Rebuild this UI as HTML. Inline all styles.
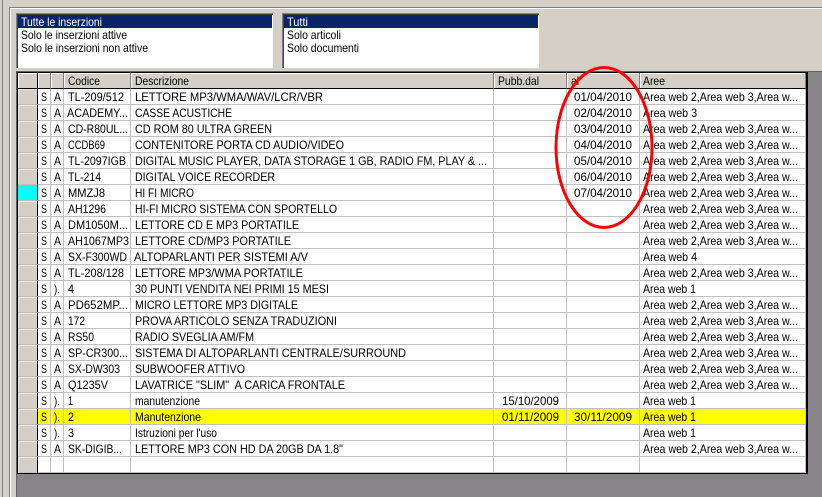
<!DOCTYPE html>
<html><head><meta charset="utf-8"><style>
html,body{margin:0;padding:0}
body{width:822px;height:497px;overflow:hidden;position:relative;background:#d4d0c8;color:#000}
.a{position:absolute}
table{position:absolute;left:18px;top:73px;border-collapse:separate;border-spacing:0;table-layout:fixed;width:788px;background:#fff}
td,th{height:15px;padding:0;border-right:1px solid #c0c0c0;border-bottom:1px solid #c0c0c0;font-size:0;line-height:0;box-sizing:content-box}
th{background:#d4d0c8;border-right-color:#808080;border-bottom-color:#000;box-shadow:inset 1px 1px 0 #fff}
td.i{background:#d4d0c8;border-right:1px solid #000;border-bottom:1px solid #c0c0c0;box-shadow:inset 1px 1px 0 #e8e6e0}
th.i{border-right:1px solid #000}
.y td:not(.i){background:#ff0}
svg text{font-family:"Liberation Sans",sans-serif;font-size:12px;white-space:pre;fill:#000}
</style></head><body>
<div class="a" style="left:2px;top:0;width:1px;height:497px;background:#808080"></div>
<div class="a" style="left:9px;top:7px;width:813px;height:1px;background:#808080"></div>
<div class="a" style="left:10px;top:8px;width:812px;height:1px;background:#fff"></div>
<div class="a" style="left:9px;top:7px;width:1px;height:490px;background:#808080"></div>
<div class="a" style="left:10px;top:8px;width:1px;height:489px;background:#fff"></div>

<div class="a" style="left:16px;top:13px;width:257px;height:55px;background:#808080"></div>
<div class="a" style="left:17px;top:14px;width:256px;height:54px;background:#404040"></div>
<div class="a" style="left:18px;top:15px;width:255px;height:53px;background:#fff"></div>
<div class="a" style="left:18px;top:15px;width:254px;height:13px;background:#0a246a"></div>
<div class="a" style="left:282px;top:13px;width:257px;height:55px;background:#808080"></div>
<div class="a" style="left:283px;top:14px;width:256px;height:54px;background:#404040"></div>
<div class="a" style="left:284px;top:15px;width:255px;height:53px;background:#fff"></div>
<div class="a" style="left:284px;top:15px;width:254px;height:13px;background:#0a246a"></div>

<div class="a" style="left:17px;top:72px;width:805px;height:425px;background:#868486"></div>
<div class="a" style="left:16px;top:71px;width:806px;height:1px;background:#606060"></div>
<div class="a" style="left:16px;top:71px;width:1px;height:426px;background:#606060"></div>
<div class="a" style="left:17px;top:72px;width:791px;height:402px;background:#000"></div>
<table><colgroup><col style="width:20px"><col style="width:13px"><col style="width:13px"><col style="width:67px"><col style="width:363px"><col style="width:73px"><col style="width:73px"><col style="width:166px"></colgroup>
<tr><th class="i"></th><th></th><th></th><th></th><th></th><th></th><th></th><th></th></tr>
<tr><td class="i"></td><td></td><td></td><td></td><td></td><td></td><td></td><td></td></tr>
<tr><td class="i"></td><td></td><td></td><td></td><td></td><td></td><td></td><td></td></tr>
<tr><td class="i"></td><td></td><td></td><td></td><td></td><td></td><td></td><td></td></tr>
<tr><td class="i"></td><td></td><td></td><td></td><td></td><td></td><td></td><td></td></tr>
<tr><td class="i"></td><td></td><td></td><td></td><td></td><td></td><td></td><td></td></tr>
<tr><td class="i"></td><td></td><td></td><td></td><td></td><td></td><td></td><td></td></tr>
<tr><td class="i" style="background:#00ffff;box-shadow:none"></td><td></td><td></td><td></td><td></td><td></td><td></td><td></td></tr>
<tr><td class="i"></td><td></td><td></td><td></td><td></td><td></td><td></td><td></td></tr>
<tr><td class="i"></td><td></td><td></td><td></td><td></td><td></td><td></td><td></td></tr>
<tr><td class="i"></td><td></td><td></td><td></td><td></td><td></td><td></td><td></td></tr>
<tr><td class="i"></td><td></td><td></td><td></td><td></td><td></td><td></td><td></td></tr>
<tr><td class="i"></td><td></td><td></td><td></td><td></td><td></td><td></td><td></td></tr>
<tr><td class="i"></td><td></td><td></td><td></td><td></td><td></td><td></td><td></td></tr>
<tr><td class="i"></td><td></td><td></td><td></td><td></td><td></td><td></td><td></td></tr>
<tr><td class="i"></td><td></td><td></td><td></td><td></td><td></td><td></td><td></td></tr>
<tr><td class="i"></td><td></td><td></td><td></td><td></td><td></td><td></td><td></td></tr>
<tr><td class="i"></td><td></td><td></td><td></td><td></td><td></td><td></td><td></td></tr>
<tr><td class="i"></td><td></td><td></td><td></td><td></td><td></td><td></td><td></td></tr>
<tr><td class="i"></td><td></td><td></td><td></td><td></td><td></td><td></td><td></td></tr>
<tr><td class="i"></td><td></td><td></td><td></td><td></td><td></td><td></td><td></td></tr>
<tr class="y"><td class="i"></td><td></td><td></td><td></td><td></td><td></td><td></td><td></td></tr>
<tr><td class="i"></td><td></td><td></td><td></td><td></td><td></td><td></td><td></td></tr>
<tr><td class="i"></td><td></td><td></td><td></td><td></td><td></td><td></td><td></td></tr>
<tr><td class="i"></td><td></td><td></td><td></td><td></td><td></td><td></td><td></td></tr>
</table>

<svg class="a" style="left:0;top:0" width="822" height="497" xmlns="http://www.w3.org/2000/svg">
<text x="21" y="26" textLength="81" lengthAdjust="spacingAndGlyphs" style="fill:#fff">Tutte le inserzioni</text>
<text x="21" y="39" textLength="106" lengthAdjust="spacingAndGlyphs">Solo le inserzioni attive</text>
<text x="21" y="52" textLength="127" lengthAdjust="spacingAndGlyphs">Solo le inserzioni non attive</text>
<text x="287" y="26" textLength="21" lengthAdjust="spacingAndGlyphs" style="fill:#fff">Tutti</text>
<text x="287" y="39" textLength="54" lengthAdjust="spacingAndGlyphs">Solo articoli</text>
<text x="287" y="52" textLength="72" lengthAdjust="spacingAndGlyphs">Solo documenti</text>

<text x="68" y="85" textLength="32" lengthAdjust="spacingAndGlyphs">Codice</text>
<text x="135" y="85" textLength="54" lengthAdjust="spacingAndGlyphs">Descrizione</text>
<text x="498" y="85" textLength="41" lengthAdjust="spacingAndGlyphs">Pubb.dal</text>
<text x="571" y="85" textLength="8" lengthAdjust="spacingAndGlyphs">al</text>
<text x="643" y="85" textLength="22" lengthAdjust="spacingAndGlyphs">Aree</text>

<text x="41" y="101" textLength="6" lengthAdjust="spacingAndGlyphs">S</text><text x="54" y="101" textLength="7" lengthAdjust="spacingAndGlyphs">A</text><text x="68" y="101" textLength="56" lengthAdjust="spacingAndGlyphs">TL-209/512</text><text x="135" y="101" textLength="188" lengthAdjust="spacingAndGlyphs">LETTORE MP3/WMA/WAV/LCR/VBR</text><text x="574" y="101" textLength="58" lengthAdjust="spacingAndGlyphs">01/04/2010</text><text x="643" y="101" textLength="155" lengthAdjust="spacingAndGlyphs">Area web 2,Area web 3,Area w...</text>
<text x="41" y="117" textLength="6" lengthAdjust="spacingAndGlyphs">S</text><text x="54" y="117" textLength="7" lengthAdjust="spacingAndGlyphs">A</text><text x="67" y="117" textLength="61" lengthAdjust="spacingAndGlyphs">ACADEMY...</text><text x="135" y="117" textLength="97" lengthAdjust="spacingAndGlyphs">CASSE ACUSTICHE</text><text x="574" y="117" textLength="58" lengthAdjust="spacingAndGlyphs">02/04/2010</text><text x="643" y="117" textLength="54" lengthAdjust="spacingAndGlyphs">Area web 3</text>
<text x="41" y="133" textLength="6" lengthAdjust="spacingAndGlyphs">S</text><text x="54" y="133" textLength="7" lengthAdjust="spacingAndGlyphs">A</text><text x="68" y="133" textLength="60" lengthAdjust="spacingAndGlyphs">CD-R80UL...</text><text x="135" y="133" textLength="137" lengthAdjust="spacingAndGlyphs">CD ROM 80 ULTRA GREEN</text><text x="574" y="133" textLength="58" lengthAdjust="spacingAndGlyphs">03/04/2010</text><text x="643" y="133" textLength="155" lengthAdjust="spacingAndGlyphs">Area web 2,Area web 3,Area w...</text>
<text x="41" y="149" textLength="6" lengthAdjust="spacingAndGlyphs">S</text><text x="54" y="149" textLength="7" lengthAdjust="spacingAndGlyphs">A</text><text x="68" y="149" textLength="37" lengthAdjust="spacingAndGlyphs">CCDB69</text><text x="135" y="149" textLength="209" lengthAdjust="spacingAndGlyphs">CONTENITORE PORTA CD AUDIO/VIDEO</text><text x="574" y="149" textLength="58" lengthAdjust="spacingAndGlyphs">04/04/2010</text><text x="643" y="149" textLength="155" lengthAdjust="spacingAndGlyphs">Area web 2,Area web 3,Area w...</text>
<text x="41" y="165" textLength="6" lengthAdjust="spacingAndGlyphs">S</text><text x="54" y="165" textLength="7" lengthAdjust="spacingAndGlyphs">A</text><text x="68" y="165" textLength="58" lengthAdjust="spacingAndGlyphs">TL-2097IGB</text><text x="135" y="165" textLength="352" lengthAdjust="spacingAndGlyphs">DIGITAL MUSIC PLAYER, DATA STORAGE 1 GB, RADIO FM, PLAY &amp; ...</text><text x="574" y="165" textLength="58" lengthAdjust="spacingAndGlyphs">05/04/2010</text><text x="643" y="165" textLength="155" lengthAdjust="spacingAndGlyphs">Area web 2,Area web 3,Area w...</text>
<text x="41" y="181" textLength="6" lengthAdjust="spacingAndGlyphs">S</text><text x="54" y="181" textLength="7" lengthAdjust="spacingAndGlyphs">A</text><text x="68" y="181" textLength="33" lengthAdjust="spacingAndGlyphs">TL-214</text><text x="135" y="181" textLength="140" lengthAdjust="spacingAndGlyphs">DIGITAL VOICE RECORDER</text><text x="574" y="181" textLength="58" lengthAdjust="spacingAndGlyphs">06/04/2010</text><text x="643" y="181" textLength="155" lengthAdjust="spacingAndGlyphs">Area web 2,Area web 3,Area w...</text>
<text x="41" y="197" textLength="6" lengthAdjust="spacingAndGlyphs">S</text><text x="54" y="197" textLength="7" lengthAdjust="spacingAndGlyphs">A</text><text x="68" y="197" textLength="37" lengthAdjust="spacingAndGlyphs">MMZJ8</text><text x="135" y="197" textLength="59" lengthAdjust="spacingAndGlyphs">HI FI MICRO</text><text x="574" y="197" textLength="58" lengthAdjust="spacingAndGlyphs">07/04/2010</text><text x="643" y="197" textLength="155" lengthAdjust="spacingAndGlyphs">Area web 2,Area web 3,Area w...</text>
<text x="41" y="213" textLength="6" lengthAdjust="spacingAndGlyphs">S</text><text x="54" y="213" textLength="7" lengthAdjust="spacingAndGlyphs">A</text><text x="68" y="213" textLength="38" lengthAdjust="spacingAndGlyphs">AH1296</text><text x="135" y="213" textLength="202" lengthAdjust="spacingAndGlyphs">HI-FI MICRO SISTEMA CON SPORTELLO</text><text x="643" y="213" textLength="155" lengthAdjust="spacingAndGlyphs">Area web 2,Area web 3,Area w...</text>
<text x="41" y="229" textLength="6" lengthAdjust="spacingAndGlyphs">S</text><text x="54" y="229" textLength="7" lengthAdjust="spacingAndGlyphs">A</text><text x="68" y="229" textLength="60" lengthAdjust="spacingAndGlyphs">DM1050M...</text><text x="135" y="229" textLength="164" lengthAdjust="spacingAndGlyphs">LETTORE CD E MP3 PORTATILE</text><text x="643" y="229" textLength="155" lengthAdjust="spacingAndGlyphs">Area web 2,Area web 3,Area w...</text>
<text x="41" y="245" textLength="6" lengthAdjust="spacingAndGlyphs">S</text><text x="54" y="245" textLength="7" lengthAdjust="spacingAndGlyphs">A</text><text x="68" y="245" textLength="61" lengthAdjust="spacingAndGlyphs">AH1067MP3</text><text x="135" y="245" textLength="156" lengthAdjust="spacingAndGlyphs">LETTORE CD/MP3 PORTATILE</text><text x="643" y="245" textLength="155" lengthAdjust="spacingAndGlyphs">Area web 2,Area web 3,Area w...</text>
<text x="41" y="261" textLength="6" lengthAdjust="spacingAndGlyphs">S</text><text x="54" y="261" textLength="7" lengthAdjust="spacingAndGlyphs">A</text><text x="68" y="261" textLength="59" lengthAdjust="spacingAndGlyphs">SX-F300WD</text><text x="134" y="261" textLength="174" lengthAdjust="spacingAndGlyphs">ALTOPARLANTI PER SISTEMI A/V</text><text x="643" y="261" textLength="54" lengthAdjust="spacingAndGlyphs">Area web 4</text>
<text x="41" y="277" textLength="6" lengthAdjust="spacingAndGlyphs">S</text><text x="54" y="277" textLength="7" lengthAdjust="spacingAndGlyphs">A</text><text x="68" y="277" textLength="56" lengthAdjust="spacingAndGlyphs">TL-208/128</text><text x="135" y="277" textLength="168" lengthAdjust="spacingAndGlyphs">LETTORE MP3/WMA PORTATILE</text><text x="643" y="277" textLength="155" lengthAdjust="spacingAndGlyphs">Area web 2,Area web 3,Area w...</text>
<text x="41" y="293" textLength="6" lengthAdjust="spacingAndGlyphs">S</text><text x="54" y="293" textLength="6" lengthAdjust="spacingAndGlyphs">).</text><text x="68" y="293" textLength="6" lengthAdjust="spacingAndGlyphs">4</text><text x="135" y="293" textLength="194" lengthAdjust="spacingAndGlyphs">30 PUNTI VENDITA NEI PRIMI 15 MESI</text><text x="643" y="293" textLength="53" lengthAdjust="spacingAndGlyphs">Area web 1</text>
<text x="41" y="309" textLength="6" lengthAdjust="spacingAndGlyphs">S</text><text x="54" y="309" textLength="7" lengthAdjust="spacingAndGlyphs">A</text><text x="68" y="309" textLength="60" lengthAdjust="spacingAndGlyphs">PD652MP...</text><text x="135" y="309" textLength="163" lengthAdjust="spacingAndGlyphs">MICRO LETTORE MP3 DIGITALE</text><text x="643" y="309" textLength="155" lengthAdjust="spacingAndGlyphs">Area web 2,Area web 3,Area w...</text>
<text x="41" y="325" textLength="6" lengthAdjust="spacingAndGlyphs">S</text><text x="54" y="325" textLength="7" lengthAdjust="spacingAndGlyphs">A</text><text x="68" y="325" textLength="17" lengthAdjust="spacingAndGlyphs">172</text><text x="135" y="325" textLength="202" lengthAdjust="spacingAndGlyphs">PROVA ARTICOLO SENZA TRADUZIONI</text><text x="643" y="325" textLength="155" lengthAdjust="spacingAndGlyphs">Area web 2,Area web 3,Area w...</text>
<text x="41" y="341" textLength="6" lengthAdjust="spacingAndGlyphs">S</text><text x="54" y="341" textLength="7" lengthAdjust="spacingAndGlyphs">A</text><text x="68" y="341" textLength="26" lengthAdjust="spacingAndGlyphs">RS50</text><text x="135" y="341" textLength="119" lengthAdjust="spacingAndGlyphs">RADIO SVEGLIA AM/FM</text><text x="643" y="341" textLength="155" lengthAdjust="spacingAndGlyphs">Area web 2,Area web 3,Area w...</text>
<text x="41" y="357" textLength="6" lengthAdjust="spacingAndGlyphs">S</text><text x="54" y="357" textLength="7" lengthAdjust="spacingAndGlyphs">A</text><text x="68" y="357" textLength="60" lengthAdjust="spacingAndGlyphs">SP-CR300...</text><text x="135" y="357" textLength="271" lengthAdjust="spacingAndGlyphs">SISTEMA DI ALTOPARLANTI CENTRALE/SURROUND</text><text x="643" y="357" textLength="155" lengthAdjust="spacingAndGlyphs">Area web 2,Area web 3,Area w...</text>
<text x="41" y="373" textLength="6" lengthAdjust="spacingAndGlyphs">S</text><text x="54" y="373" textLength="7" lengthAdjust="spacingAndGlyphs">A</text><text x="68" y="373" textLength="52" lengthAdjust="spacingAndGlyphs">SX-DW303</text><text x="135" y="373" textLength="110" lengthAdjust="spacingAndGlyphs">SUBWOOFER ATTIVO</text><text x="643" y="373" textLength="155" lengthAdjust="spacingAndGlyphs">Area web 2,Area web 3,Area w...</text>
<text x="41" y="389" textLength="6" lengthAdjust="spacingAndGlyphs">S</text><text x="54" y="389" textLength="7" lengthAdjust="spacingAndGlyphs">A</text><text x="68" y="389" textLength="40" lengthAdjust="spacingAndGlyphs">Q1235V</text><text x="135" y="389" textLength="210" lengthAdjust="spacingAndGlyphs">LAVATRICE "SLIM"  A CARICA FRONTALE</text><text x="643" y="389" textLength="155" lengthAdjust="spacingAndGlyphs">Area web 2,Area web 3,Area w...</text>
<text x="41" y="405" textLength="6" lengthAdjust="spacingAndGlyphs">S</text><text x="54" y="405" textLength="6" lengthAdjust="spacingAndGlyphs">).</text><text x="68" y="405" textLength="5" lengthAdjust="spacingAndGlyphs">1</text><text x="135" y="405" textLength="65" lengthAdjust="spacingAndGlyphs">manutenzione</text><text x="502" y="405" textLength="57" lengthAdjust="spacingAndGlyphs">15/10/2009</text><text x="643" y="405" textLength="53" lengthAdjust="spacingAndGlyphs">Area web 1</text>
<text x="41" y="421" textLength="6" lengthAdjust="spacingAndGlyphs">S</text><text x="54" y="421" textLength="6" lengthAdjust="spacingAndGlyphs">).</text><text x="68" y="421" textLength="6" lengthAdjust="spacingAndGlyphs">2</text><text x="135" y="421" textLength="66" lengthAdjust="spacingAndGlyphs">Manutenzione</text><text x="502" y="421" textLength="57" lengthAdjust="spacingAndGlyphs">01/11/2009</text><text x="574" y="421" textLength="58" lengthAdjust="spacingAndGlyphs">30/11/2009</text><text x="643" y="421" textLength="53" lengthAdjust="spacingAndGlyphs">Area web 1</text>
<text x="41" y="437" textLength="6" lengthAdjust="spacingAndGlyphs">S</text><text x="54" y="437" textLength="6" lengthAdjust="spacingAndGlyphs">).</text><text x="68" y="437" textLength="6" lengthAdjust="spacingAndGlyphs">3</text><text x="135" y="437" textLength="82" lengthAdjust="spacingAndGlyphs">Istruzioni per l'uso</text><text x="643" y="437" textLength="53" lengthAdjust="spacingAndGlyphs">Area web 1</text>
<text x="41" y="453" textLength="6" lengthAdjust="spacingAndGlyphs">S</text><text x="54" y="453" textLength="7" lengthAdjust="spacingAndGlyphs">A</text><text x="68" y="453" textLength="54" lengthAdjust="spacingAndGlyphs">SK-DIGIB...</text><text x="135" y="453" textLength="208" lengthAdjust="spacingAndGlyphs">LETTORE MP3 CON HD DA 20GB DA 1.8"</text><text x="643" y="453" textLength="155" lengthAdjust="spacingAndGlyphs">Area web 2,Area web 3,Area w...</text>
<ellipse cx="604" cy="147.5" rx="48" ry="80" fill="none" stroke="#f00" stroke-width="3"/>
</svg>
</body></html>
